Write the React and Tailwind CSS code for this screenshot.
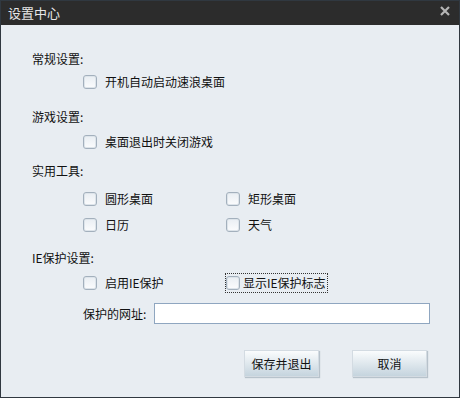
import React from 'react';

const Checkbox = () => (
  <span className="w-[14px] h-[14px] shrink-0 rounded-[3px] border border-[#a3b0bd] bg-gradient-to-b from-[#e9eef3] to-[#fbfcfd] shadow-[inset_0_0_0_1px_#dde4ea]" />
);

const Option = ({ label, focused }) => (
  <div className="flex items-center h-[16px]">
    {focused ? (
      <span className="flex items-center gap-[3px] h-[20px] ml-[-1px] pr-[1px] border border-dotted border-[#333]">
        <Checkbox />
        <span>{label}</span>
      </span>
    ) : (
      <span className="flex items-center gap-[8px]">
        <Checkbox />
        <span>{label}</span>
      </span>
    )}
  </div>
);

const Heading = ({ children, className = '' }) => (
  <div className={`h-[16px] leading-[16px] ${className}`}>{children}</div>
);

export default function App() {
  return (
    <div
      className="w-[460px] h-[398px] flex flex-col border border-[#303840] bg-[#e8edf2] text-[12px] text-[#111]"
      style={{ fontFamily: '"Noto Sans CJK SC", "Microsoft YaHei", sans-serif' }}
    >
      {/* title bar */}
      <div className="h-[24px] shrink-0 flex items-center pl-[7px] pr-[9px] bg-[#2c2c2c] text-[13px] text-[#e8e8e8]">
        <span>设置中心</span>
        <svg className="ml-auto mb-[4px]" width="10" height="10" viewBox="0 0 10 10">
          <path d="M1 1L9 9M9 1L1 9" stroke="#b5b5b5" strokeWidth="2.2" />
        </svg>
      </div>

      <div className="flex flex-col pl-[31px] pt-[26px]">
        <Heading>常规设置:</Heading>
        <div className="pl-[51px] mt-[7px]">
          <Option label="开机自动启动速浪桌面" />
        </div>

        <Heading className="mt-[19px]">游戏设置:</Heading>
        <div className="pl-[51px] mt-[9px]">
          <Option label="桌面退出时关闭游戏" />
        </div>

        <Heading className="mt-[13px]">实用工具:</Heading>
        <div className="pl-[51px] mt-[12px] grid grid-cols-[143px_1fr] gap-y-[10px]">
          <Option label="圆形桌面" />
          <Option label="矩形桌面" />
          <Option label="日历" />
          <Option label="天气" />
        </div>

        <Heading className="mt-[17px]">IE保护设置:</Heading>
        <div className="pl-[51px] mt-[9px] grid grid-cols-[143px_1fr]">
          <Option label="启用IE保护" />
          <Option label="显示IE保护标志" focused />
        </div>

        <div className="pl-[51px] mt-[12px] flex items-center">
          <span className="w-[71px]">保护的网址:</span>
          <div className="w-[276px] h-[21px] border border-[#8fa6c0] bg-white" />
        </div>

        <div className="mt-[26px] flex gap-[33px] pl-[212px]">
          <button className="w-[75px] h-[27px] border border-[#d3dbe2] bg-gradient-to-b from-[#fafcfd] to-[#c5d4de] shadow-[1px_1px_1px_#b7c2cb] text-[12px] text-[#111]">
            保存并退出
          </button>
          <button className="w-[75px] h-[27px] border border-[#d3dbe2] bg-gradient-to-b from-[#fafcfd] to-[#c5d4de] shadow-[1px_1px_1px_#b7c2cb] text-[12px] text-[#111]">
            取消
          </button>
        </div>
      </div>
    </div>
  );
}
